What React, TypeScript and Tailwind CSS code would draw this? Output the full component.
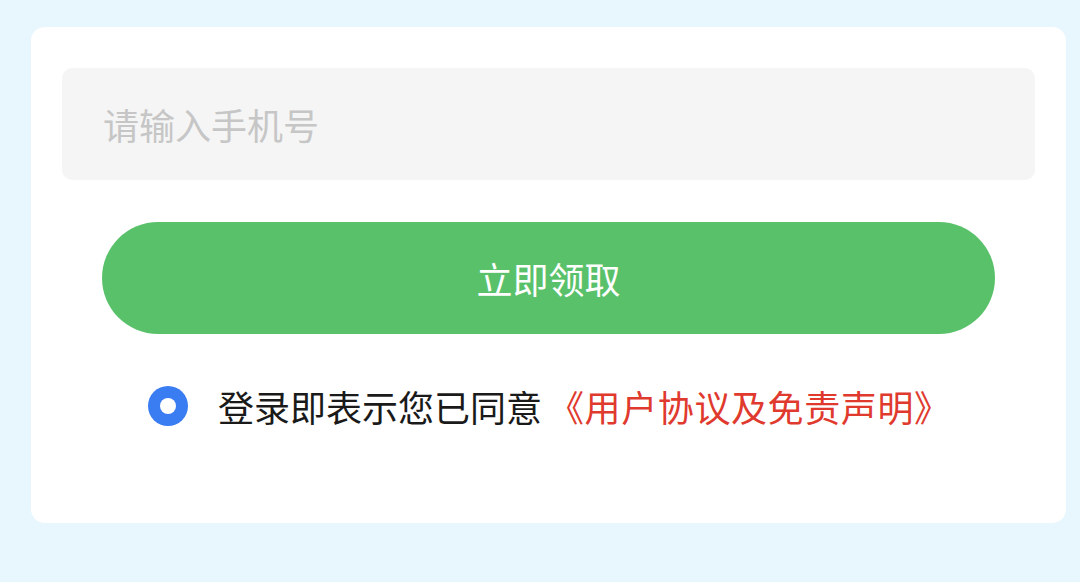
export default function App() {
  return (
    <div
      className="w-[1080px] h-[582px] bg-[#e8f6fe] pt-[27px] pl-[31px] overflow-hidden"
      style={{ fontFamily: '"Noto Sans CJK SC", "Noto Sans", sans-serif' }}
    >
      <div className="w-[1035px] h-[496px] bg-white rounded-[14px] px-[31px] pt-[41px] flex flex-col">
        {/* 手机号输入 */}
        <div className="h-[112px] bg-[#f5f5f5] rounded-[10px] flex items-center px-[41px]">
          <input
            className="w-full bg-transparent outline-none text-[36px] text-[#333] placeholder:text-[#c6c6c6]"
            placeholder="请输入手机号"
          />
        </div>

        {/* 领取按钮 */}
        <button className="mt-[42px] mx-[40px] h-[112px] rounded-full bg-[#5ac16b] text-white text-[36px] flex items-center justify-center">
          立即领取
        </button>

        {/* 协议 */}
        <div className="mt-[52px] flex items-center pl-[86px]">
          <span className="w-[40px] h-[40px] rounded-full bg-[#3a7df2] flex items-center justify-center shrink-0">
            <span className="w-[16px] h-[16px] rounded-full bg-white" />
          </span>
          <span className="ml-[30px] text-[36px] text-[#1a1a1a] leading-none">
            登录即表示您已同意
            <span className="ml-[6px] text-[#e03a2e] tracking-[0.6px]">《用户协议及免责声明》</span>
          </span>
        </div>
      </div>
    </div>
  );
}
